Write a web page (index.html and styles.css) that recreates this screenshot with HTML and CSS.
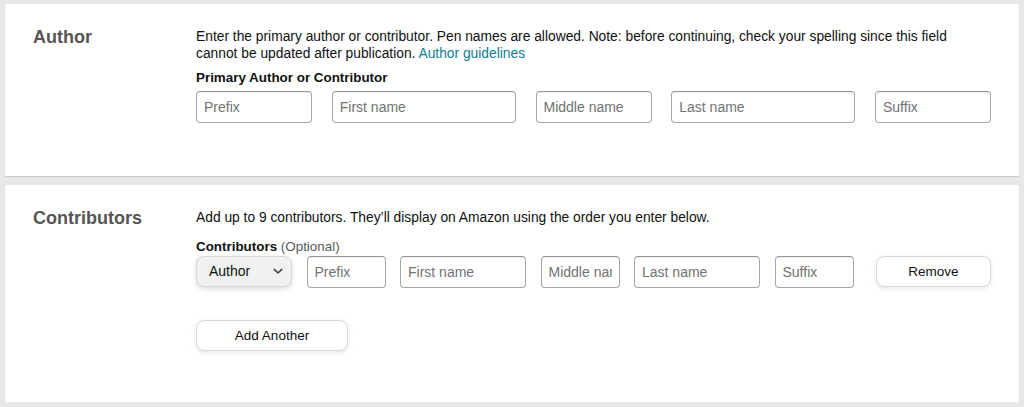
FILE: index.html
```html
<!DOCTYPE html>
<html lang="en">
<head>
<meta charset="utf-8">
<title>Author and Contributors</title>
<link rel="stylesheet" href="styles.css">
</head>
<body>
<section class="card card-author">
  <h2 class="card-title">Author</h2>
  <div class="card-body">
    <p class="desc"><span>Enter the primary author or contributor. Pen names are allowed. Note: before continuing, check your spelling since this field cannot be updated after publication.</span> <a href="#" class="link">Author guidelines</a></p>
    <div class="label label-author">Primary Author or Contributor</div>
    <div class="name-row">
      <input class="field field-short" type="text" placeholder="Prefix">
      <input class="field field-long" type="text" placeholder="First name">
      <input class="field field-short" type="text" placeholder="Middle name">
      <input class="field field-long" type="text" placeholder="Last name">
      <input class="field field-short" type="text" placeholder="Suffix">
    </div>
  </div>
</section>
<section class="card card-contrib">
  <h2 class="card-title">Contributors</h2>
  <div class="card-body">
    <p class="desc">Add up to 9 contributors. They’ll display on Amazon using the order you enter below.</p>
    <div class="label label-contrib"><span>Contributors</span> <span class="optional">(Optional)</span></div>
    <div class="contrib-row">
      <div class="select">
        <span class="select-text">Author</span>
        <svg class="chevron" width="10" height="7" viewBox="0 0 10 7"><path d="M1.3 1.4 L5 5 L8.7 1.4" fill="none" stroke="#444" stroke-width="1.6" stroke-linecap="round" stroke-linejoin="round"/></svg>
      </div>
      <input class="field field-c-short" type="text" placeholder="Prefix">
      <input class="field field-c-long" type="text" placeholder="First name">
      <input class="field field-c-short" type="text" placeholder="Middle name">
      <input class="field field-c-long" type="text" placeholder="Last name">
      <input class="field field-c-short" type="text" placeholder="Suffix">
      <button class="btn btn-remove" type="button">Remove</button>
    </div>
    <button class="btn btn-add" type="button">Add Another</button>
  </div>
</section>
</body>
</html>
```
FILE: styles.css
```css
* { box-sizing: border-box; }

html, body {
  margin: 0;
  background: #e8e8e8;
}

body {
  padding: 4px 5px 0;
  font-family: "Liberation Sans", Arial, sans-serif;
  color: #0f1111;
}

.card {
  background: #fff;
  display: grid;
  grid-template-columns: 163px 1fr;
  padding: 21px 28px 0 28px;
  box-shadow: 0 1px 1px rgba(0, 0, 0, 0.12);
}

.card-author { height: 172px; }
.card-contrib { height: 217px; margin-top: 9px; }

.card-title {
  margin: 0;
  font-size: 18px;
  line-height: 24px;
  font-weight: 700;
  color: #555;
}

.card-body { min-width: 0; }

.desc {
  margin: 2.5px 0 0;
  font-size: 13.8px;
  line-height: 17.5px;
}

.link {
  color: #0a7f93;
  text-decoration: none;
}

.label {
  font-size: 13.4px;
  line-height: 18px;
  font-weight: 700;
}

.label-author { margin-top: 6.5px; }
.label-contrib { margin-top: 11.5px; }

.optional {
  font-weight: 400;
  color: #565959;
}

.name-row {
  display: flex;
  justify-content: space-between;
  margin-top: 4px;
}

.field {
  height: 32px;
  border: 1px solid #a6a6a6;
  border-top-color: #949494;
  border-radius: 4px;
  box-shadow: 0 1px 0 rgba(0, 0, 0, 0.06) inset;
  padding: 0 7px;
  font-family: inherit;
  font-size: 14px;
  color: #0f1111;
  background: #fff;
}

.field::placeholder { color: #6f7373; opacity: 1; }

.field-short { width: 116px; }
.field-long { width: 184px; }

.contrib-row {
  display: flex;
  align-items: flex-start;
  gap: 14.5px;
}

.field-c-short { width: 79px; }
.field-c-long { width: 126px; }

.select {
  width: 96px;
  height: 31px;
  display: flex;
  align-items: center;
  justify-content: space-between;
  padding: 0 8px 0 12px;
  border: 1px solid #d5d9d9;
  border-radius: 8px;
  background: #f0f2f2;
  box-shadow: 0 2px 5px rgba(15, 17, 17, 0.15);
  font-size: 14px;
}

.chevron { display: block; margin-top: 1px; }

.btn {
  height: 31px;
  border: 1px solid #d5d9d9;
  border-radius: 8px;
  background: #fff;
  box-shadow: 0 2px 5px rgba(213, 217, 217, 0.5);
  font-family: inherit;
  font-size: 13.5px;
  color: #0f1111;
  padding: 0;
}

.btn-remove {
  width: 115px;
  margin-left: auto;
}

.btn-add {
  display: block;
  width: 152px;
  margin-top: 32px;
}
```
